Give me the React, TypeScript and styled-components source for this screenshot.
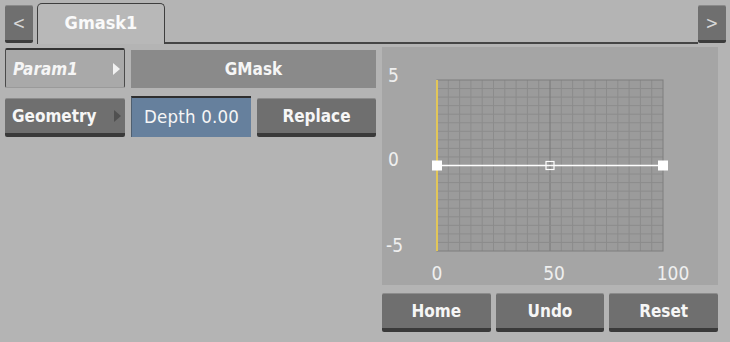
import React from 'react';
import styled, { createGlobalStyle } from 'styled-components';

const GlobalStyle = createGlobalStyle`
  html, body {
    margin: 0;
    padding: 0;
    background: #b4b4b4;
  }
  body {
    font-family: 'DejaVu Sans Condensed', 'DejaVu Sans', sans-serif;
  }
`;

const Page = styled.div`
  width: 730px;
  height: 342px;
  background: #b4b4b4;
  display: flex;
  flex-direction: column;
  overflow: hidden;
  color: #f4f4f4;
`;

const TabBar = styled.div`
  display: flex;
  align-items: flex-end;
  height: 44px;
  padding: 3px 4px 0 5px;
  box-sizing: border-box;
`;

const NavButton = styled.button`
  width: 28px;
  height: 38px;
  padding: 0;
  border: none;
  border-top: 1px solid #8a8a8a;
  border-bottom: 3px solid #3c3c3c;
  border-radius: 2px;
  background: #6f6f6f;
  color: #d8d8d8;
  font-family: inherit;
  font-size: 17px;
  flex-shrink: 0;
  margin-bottom: 1px;
`;

const Tab = styled.div`
  width: 128px;
  height: 41px;
  margin-left: 4px;
  box-sizing: border-box;
  border: 1.5px solid #3e3e3e;
  border-bottom: none;
  border-radius: 5px 5px 0 0;
  background: #b8b8b8;
  display: flex;
  align-items: center;
  justify-content: center;
  font-weight: bold;
  font-size: 18px;
  color: #fafafa;
  padding-bottom: 4px;
`;

const TabLine = styled.div`
  flex: 1;
  align-self: stretch;
  border-bottom: 2px solid #454545;
`;

const Body = styled.div`
  display: flex;
  padding: 3px 12px 0 5px;
  gap: 6px;
`;

const LeftColumn = styled.div`
  width: 371px;
  display: flex;
  flex-direction: column;
  gap: 8px;
  padding-top: 1px;
`;

const Row = styled.div`
  display: flex;
  gap: 6px;
  align-items: flex-start;
`;

const MenuButton = styled.div<{ $sunken?: boolean }>`
  width: 120px;
  height: 40px;
  box-sizing: border-box;
  display: flex;
  align-items: center;
  justify-content: space-between;
  padding: 0 4px 0 7px;
  font-size: 17px;
  font-weight: bold;
  font-style: ${({ $sunken }) => ($sunken ? 'italic' : 'normal')};
  color: #f6f6f6;
  background: ${({ $sunken }) => ($sunken ? '#a9a9a9' : '#6f6f6f')};
  border-radius: 2px;
  ${({ $sunken }) =>
    $sunken
      ? `border: 1px solid #4a4a4a; border-top: 2px solid #333; border-bottom: 1px solid #9a9a9a;`
      : `border-top: 1px solid #8c8c8c; border-bottom: 4px solid #3a3a3a; margin-top: 2px; height: 39px;`}
`;

const Arrow = styled.span<{ $light?: boolean }>`
  width: 0;
  height: 0;
  border-top: 6px solid transparent;
  border-bottom: 6px solid transparent;
  border-left: 7px solid ${({ $light }) => ($light ? '#f2f2f2' : '#505050')};
`;

const Field = styled.div`
  flex: 1;
  height: 38px;
  margin-top: 2px;
  background: #8a8a8a;
  display: flex;
  align-items: center;
  justify-content: center;
  font-weight: bold;
  font-size: 17px;
  color: #f6f6f6;
`;

const ValueField = styled.div`
  width: 120px;
  height: 41px;
  box-sizing: border-box;
  background: #66809d;
  border-top: 2px solid #2e2e2e;
  border-left: 1px solid #4f5f70;
  display: flex;
  align-items: center;
  justify-content: center;
  font-size: 18.5px;
  color: #f6f6f6;
  padding-bottom: 2px;
  letter-spacing: 0.2px;
`;

const ActionButton = styled.button`
  flex: 1;
  height: 39px;
  margin-top: 2px;
  box-sizing: border-box;
  border: none;
  border-top: 1px solid #8c8c8c;
  border-bottom: 4px solid #3a3a3a;
  border-radius: 2px;
  background: #6f6f6f;
  color: #f6f6f6;
  font-family: inherit;
  font-weight: bold;
  font-size: 17px;
  padding: 0;
`;

const RightColumn = styled.div`
  width: 336px;
  display: flex;
  flex-direction: column;
  gap: 6px;
`;

const ChartPanel = styled.div`
  height: 238px;
  background: #a5a5a5;
`;

const ButtonRow = styled.div`
  display: flex;
  gap: 5px;
`;

const GRID_X = 55;
const GRID_Y = 33;
const GRID_W = 226;
const GRID_H = 171;
const CELLS = 20;

const Chart = () => {
  const lines = [];
  for (let i = 1; i < CELLS; i++) {
    const x = GRID_X + (GRID_W * i) / CELLS;
    const y = GRID_Y + (GRID_H * i) / CELLS;
    lines.push(
      <line key={'v' + i} x1={x} y1={GRID_Y} x2={x} y2={GRID_Y + GRID_H}
        stroke={i === CELLS / 2 ? '#787878' : '#8c8c8c'} strokeWidth={1} />,
      <line key={'h' + i} x1={GRID_X} y1={y} x2={GRID_X + GRID_W} y2={y}
        stroke="#8c8c8c" strokeWidth={1} />
    );
  }
  const midY = GRID_Y + GRID_H / 2;
  const midX = GRID_X + GRID_W / 2;
  const label = { fill: '#efefef', fontSize: 19, fontFamily: "'DejaVu Sans Condensed', 'DejaVu Sans', sans-serif" };
  return (
    <svg width="336" height="238" viewBox="0 0 336 238">
      <rect x={GRID_X} y={GRID_Y} width={GRID_W} height={GRID_H} fill="#9b9b9b" />
      {lines}
      <rect x={GRID_X} y={GRID_Y} width={GRID_W} height={GRID_H} fill="none" stroke="#7e7e7e" strokeWidth={1} />
      <line x1={GRID_X} y1={GRID_Y} x2={GRID_X} y2={GRID_Y + GRID_H} stroke="#e2c658" strokeWidth={2} />
      <line x1={GRID_X} y1={midY} x2={GRID_X + GRID_W} y2={midY} stroke="#ffffff" strokeWidth={1.5} />
      <rect x={GRID_X - 5} y={midY - 5} width={10} height={10} fill="#ffffff" />
      <rect x={GRID_X + GRID_W - 5} y={midY - 5} width={10} height={10} fill="#ffffff" />
      <rect x={midX - 4} y={midY - 4} width={8} height={8} fill="none" stroke="#ffffff" strokeWidth={1.2} />
      <text x={6} y={35} {...label}>5</text>
      <text x={6} y={119} {...label}>0</text>
      <text x={4} y={205} {...label}>-5</text>
      <text x={GRID_X} y={233} textAnchor="middle" {...label}>0</text>
      <text x={172} y={233} textAnchor="middle" {...label}>50</text>
      <text x={291} y={233} textAnchor="middle" {...label}>100</text>
    </svg>
  );
};

export default function App() {
  return (
    <Page>
      <GlobalStyle />
      <TabBar>
        <NavButton>&lt;</NavButton>
        <Tab>Gmask1</Tab>
        <TabLine />
        <NavButton>&gt;</NavButton>
      </TabBar>
      <Body>
        <LeftColumn>
          <Row>
            <MenuButton $sunken>
              Param1
              <Arrow $light />
            </MenuButton>
            <Field>GMask</Field>
          </Row>
          <Row>
            <MenuButton>
              Geometry
              <Arrow />
            </MenuButton>
            <ValueField>Depth 0.00</ValueField>
            <ActionButton>Replace</ActionButton>
          </Row>
        </LeftColumn>
        <RightColumn>
          <ChartPanel>
            <Chart />
          </ChartPanel>
          <ButtonRow>
            <ActionButton>Home</ActionButton>
            <ActionButton>Undo</ActionButton>
            <ActionButton>Reset</ActionButton>
          </ButtonRow>
        </RightColumn>
      </Body>
    </Page>
  );
}
